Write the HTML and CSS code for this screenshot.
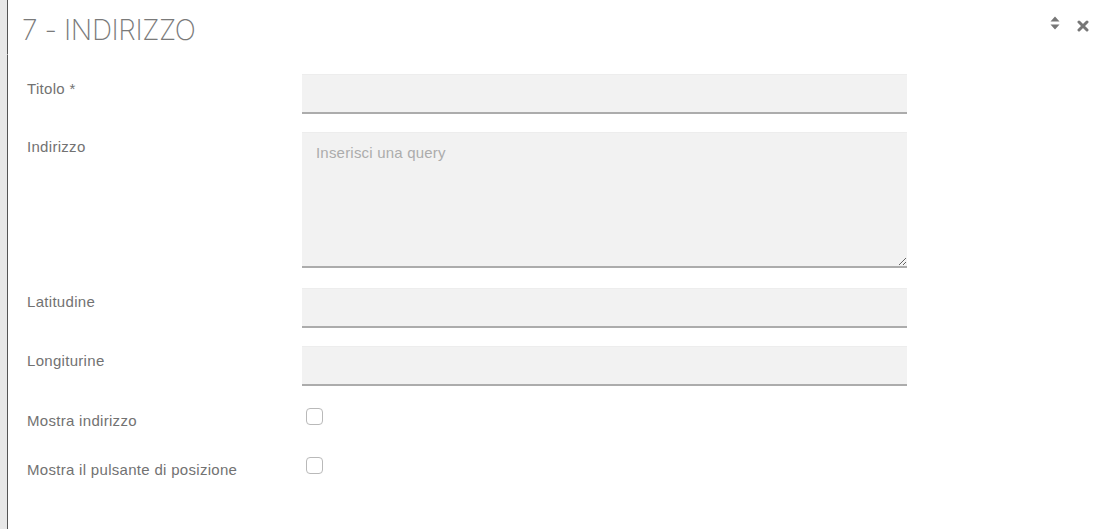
FILE: index.html
```html
<!DOCTYPE html>
<html lang="it">
<head>
<meta charset="utf-8">
<link rel="stylesheet" href="styles.css">
</head>
<body>
<div class="frame">
  <div class="strip"></div>
  <div class="panel">
    <header class="head">
      <h1 class="title">7 - INDIRIZZO</h1>
      <div class="tools">
        <svg class="sort" width="10" height="14" viewBox="0 0 10 14"><path d="M0.5 5.5 L5 0.5 L9.5 5.5 Z M0.5 8.5 L9.5 8.5 L5 13.5 Z" fill="#777"/></svg>
        <svg class="close" width="12" height="12" viewBox="0 0 12 12"><path d="M2 2 L10 10 M10 2 L2 10" stroke="#777" stroke-width="3" stroke-linecap="round"/></svg>
      </div>
    </header>
    <form class="body">
      <div class="row">
        <label class="lbl">Titolo *</label>
        <input class="field" type="text">
      </div>
      <div class="row">
        <label class="lbl">Indirizzo</label>
        <textarea class="field area" placeholder="Inserisci una query"></textarea>
      </div>
      <div class="row gap20">
        <label class="lbl lbl-lat">Latitudine</label>
        <input class="field" type="text">
      </div>
      <div class="row">
        <label class="lbl">Longiturine</label>
        <input class="field" type="text">
      </div>
      <div class="row check-row first-check">
        <label class="lbl">Mostra indirizzo</label>
        <span class="box"></span>
      </div>
      <div class="row check-row">
        <label class="lbl">Mostra il pulsante di posizione</label>
        <span class="box"></span>
      </div>
    </form>
  </div>
</div>
</body>
</html>
```
FILE: styles.css
```css
html, body {
  margin: 0;
  padding: 0;
  background: #fff;
}
body {
  font-family: "Liberation Sans", Arial, sans-serif;
  width: 1108px;
  height: 529px;
  overflow: hidden;
}
.frame {
  display: flex;
  height: 529px;
}
.strip {
  width: 7px;
  background: #e8e8e8;
  flex: none;
}
.panel {
  flex: 1;
  display: flex;
  flex-direction: column;
}
.head {
  height: 55px;
  border-left: 1px solid #555;
  border-bottom: 1px solid #fff;
  box-sizing: border-box;
  display: flex;
  align-items: flex-start;
  justify-content: space-between;
  flex: none;
}
.title {
  margin: 14px 0 0 14px;
  font-family: "Inter", "Liberation Sans", sans-serif;
  font-weight: 200;
  font-size: 28px;
  line-height: 32px;
  color: #7a7a7a;
  letter-spacing: -0.4px;
}
.tools {
  display: flex;
  align-items: flex-start;
  gap: 17px;
  margin: 16px 19px 0 0;
}
.sort { margin-top: 0; }
.close { margin-top: 4px; }
.body {
  flex: 1;
  border-left: 1px solid #555;
  margin: 0;
  padding: 19px 0 0 19px;
  display: flex;
  flex-direction: column;
  gap: 18px;
}
.row {
  display: flex;
  align-items: flex-start;
}
.row.gap20 { margin-top: 2px; }
.lbl {
  width: 275px;
  flex: none;
  font-size: 15px;
  line-height: 20px;
  padding-top: 5px;
  color: #727272;
  letter-spacing: 0.3px;
}
.lbl-lat { padding-top: 4px; }
.field {
  width: 605px;
  height: 40px;
  box-sizing: border-box;
  border: none;
  border-top: 1px solid #ededed;
  border-bottom: 2px solid #acacac;
  background: #f2f2f2;
  margin: 0;
  padding: 0 14px;
  font-family: "Liberation Sans", Arial, sans-serif;
  font-size: 15px;
  outline: none;
}
.area {
  height: 136px;
  padding: 10px 14px;
  line-height: 20px;
  resize: vertical;
  display: block;
  letter-spacing: 0.2px;
}
.area::placeholder {
  color: #acacac;
}
.check-row {
  align-items: flex-start;
}
.first-check { margin-top: 4px; }
.check-row .lbl {
  padding-top: 3px;
}
.check-row + .check-row { margin-top: 8px; }
.box {
  width: 17px;
  height: 17px;
  box-sizing: border-box;
  border: 1px solid #b9b9b9;
  border-radius: 4px;
  margin: 0 0 0 4px;
  background: #fff;
}
```
